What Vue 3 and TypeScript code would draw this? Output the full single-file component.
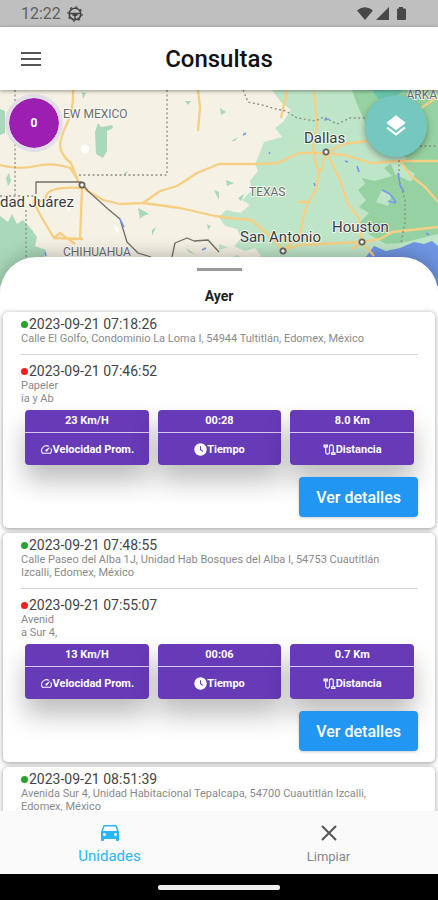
<script setup lang="ts">
interface Trip {
  start: string
  from: string
  end?: string
  to?: string[]
  stats?: { value: string; label: string; icon: 'speed' | 'clock' | 'route' }[]
}

function stats(speed: string, time: string, distance: string): Trip['stats'] {
  return [
    { value: speed, label: 'Velocidad Prom.', icon: 'speed' },
    { value: time, label: 'Tiempo', icon: 'clock' },
    { value: distance, label: 'Distancia', icon: 'route' },
  ]
}

const trips: Trip[] = [
  {
    start: '2023-09-21 07:18:26',
    from: 'Calle El Golfo, Condominio La Loma I, 54944 Tultitlán, Edomex, México',
    end: '2023-09-21 07:46:52',
    to: ['Papeler', 'ia y Ab'],
    stats: stats('23 Km/H', '00:28', '8.0 Km'),
  },
  {
    start: '2023-09-21 07:48:55',
    from: 'Calle Paseo del Alba 1J, Unidad Hab Bosques del Alba I, 54753 Cuautitlán Izcalli, Edomex, México',
    end: '2023-09-21 07:55:07',
    to: ['Avenid', 'a Sur 4,'],
    stats: stats('13 Km/H', '00:06', '0.7 Km'),
  },
  {
    start: '2023-09-21 08:51:39',
    from: 'Avenida Sur 4, Unidad Habitacional Tepalcapa, 54700 Cuautitlán Izcalli, Edomex, México',
  },
]
</script>

<template>
  <div class="screen">
    <div class="status">
      <span class="time">12:22</span>
      <svg class="wheel" viewBox="0 0 16 16" aria-hidden="true">
        <circle cx="8" cy="8" r="5.8" fill="none" stroke="#444" stroke-width="1.6" />
        <circle cx="8" cy="8" r="7.1" fill="none" stroke="#444" stroke-width="1.2" stroke-dasharray="2.2 3.38" />
        <path d="M2.5 7.4h11M8 7.5v6M5.500 8.500 8 10l2.500-1.500" fill="none" stroke="#444" stroke-width="1.5" />
      </svg>
      <svg class="signals" viewBox="0 0 50 16" aria-hidden="true">
        <g fill="#484848">
          <path d="M0 4.5Q8-2 16 4.500L8 14z" />
          <path d="M32 1v13H19z" />
          <path d="M42 1h4v1.500h2q1 0 1 1V13q0 1-1 1h-7q-1 0-1-1V3.500q0-1 1-1h1z" />
        </g>
      </svg>
    </div>

    <header class="appbar">
      <button class="menu" type="button" aria-label="Menú">
        <svg viewBox="0 0 20 16" aria-hidden="true">
          <path d="M0 2h20M0 8h20M0 14h20" stroke="#555" stroke-width="2.2" />
        </svg>
      </button>
      <h1>Consultas</h1>
    </header>

    <section class="map" aria-label="Mapa">
      <svg class="tiles" viewBox="0 90 438 196" preserveAspectRatio="xMidYMid slice">
        <rect x="0" y="90" width="438" height="196" fill="#f5f1e4" />
        <path fill="#bfe5c8" d="M272 90 281 102 291 110 283 122 275 128 282 137 264 142 259 155 255 164 258 171 250 181 252 190 242 200 250 205 240 213 226 210 219 217 225 226 237 229 241 238 232 249 219 244V286H438V90z" />
        <path fill="#96d2a1" d="M352 90H438V234L418 239 402 243 386 244 370 235 360 222 369 213 359 207 366 200 358 190 365 184 362 178 375 181 392 176 384 168 397 160 388 150 373 141 364 120 357 104z" />
        <path fill="#bfe5c8" d="M395 150l12 8-7 6 15 10-4 8-16-8-6-14zM382 190l10 4-4 12-12-4z" />
        <path fill="#6cc9ac" d="M372 90h32l-8 6-18 3z" />
        <path fill="#f5f1e4" d="M219 250l14-4 12 5 10-3 6 8-14 4-10-5-18 8zM262 97l10-3 4 8-10 4z" />
        <path fill="#7095e3" d="M366 257 374 246 386 251 400 248 414 242 424 244 432 241 438 246V286H362z" />
        <path fill="#a9d9ba" d="M0 216 8 222 12 214 17 224 23 220 32 230 37 237 35 246 46 250 44 258 30 268 0 286zM0 109l5 2v22l-5 2zM98 123l3 4 11-2 1 3-6 3v20l-4 7-7-4-1-22zM6 178l3-5 2 8-3 5zM82 92l4 1-3 6zM138 208l6 3 5 3-6 2-3 3zM152 230l4-3-4 9zM185 101l6 0-3 4zM124 173l4-2-3 5zM214 190l5 2v8zM207 224l4 2-3 4zM186 248l10 7-7-3z" />
        <path fill="#a9d9ba" d="M220 108l6 4-5 3zM231 141l7-4-3 4zM226 180l8 3-7 3zM238 198l6-4-3 7z" />
        <g fill="#fff"><circle cx="85" cy="149" r="4" /><path d="M66 205l3 8 2-8zM114 225l5 5-2 4z" /></g>

        <g fill="none" stroke="#f7cf83" stroke-width="2.300" stroke-linejoin="round">
          <path d="M73 90Q74 110 66 126T61 150 71 163L78 181 86 190 103 200 120 204 143 203 160 191 177 186 197 173 219 164 257 164 278 163 299 153 325 153 344 155 371 163 400 161 438 161" />
          <path d="M0 165Q20 170 36 166T70 168L77 178M82 188 80 240M82 188Q45 186 46 198M33 201 42 218 54 238 83 239M54 238 60 233 75 244M143 203 180 208 215 216 230 218 251 220 270 236 283 250 300 245 361 242 380 239 392 232 438 227" />
          <path d="M198 90 200 107 198 131M287 90 281 118M314 90 317 125 313 150 316 164 319 173 316 190 308 203 303 218 300 236 283 250M298 202h11M325 153 322 168 319 173M327 153 340 180 348 204 359 218 362 242 374 256M325 153 344 144 367 141M400 161 411 176 425 187 438 202M421 108 438 97M352 249l10-6M46 198 40 202" />
        </g>
        <g fill="none" stroke="#8d8d85" stroke-width="1.300" stroke-dasharray="2 2.500">
          <path d="M15 90V195M167 90V175H78M26 210V258M0 196h34" />
          <path d="M243 90 248 102 262 105 276 109 286 111 297 118 315 121 324 117 337 124 350 118 366 118M399 160V180L405 200 405 222 401 243M420 146H438" />
        </g>
        <g fill="none" stroke="#706f68" stroke-width="1.300" stroke-linejoin="round">
          <path d="M36 194V182H81L88 191 108 209 120 219 127 242 138 253 151 257M172 257 175 243 187 238 194 241 208 240 219 252" />
        </g>
        <g fill="none" stroke="#7898e8" stroke-width="1.600">
          <path d="M120 219l4 8M202 250l4-2M324 120l5-1M345 161l3 1M357 166l2 6M382 190l8 4 6 8M398 173l2 12 4 7M388 201l8 2M314 183l1 3M246 133l-3 2M270 152l-1 2M426 233l3 2M45 252l1 4" />
        </g>
        <g fill="#fff" stroke="#66645f" stroke-width="1.800">
          <circle cx="82" cy="185" r="2.600" /><circle cx="326" cy="152" r="2.600" />
          <circle cx="362" cy="242" r="2.600" /><circle cx="283" cy="251" r="2.600" />
        </g>
        <g class="region">
          <text x="63" y="118">EW MEXICO</text>
          <text x="249" y="196">TEXAS</text>
          <text x="63" y="256">CHIHUAHUA</text>
          <text x="437" y="99" text-anchor="end">ARKA</text>
        </g>
        <g class="city">
          <text x="0" y="207">dad Juárez</text>
          <text x="304" y="143">Dallas</text>
          <text x="332" y="232">Houston</text>
          <text x="240" y="242">San Antonio</text>
        </g>
      </svg>
      <div class="counter">0</div>
      <button class="layers" type="button" aria-label="Capas">
        <svg viewBox="0 0 24 24" aria-hidden="true">
          <path fill="#fff" d="m11.990 18.540-7.370-5.730L3 14.070l9 7 9-7-1.630-1.270-7.380 5.740zM12 16l7.360-5.730L21 9l-9-7-9 7 1.630 1.270L12 16z" />
        </svg>
      </button>
    </section>

    <main class="sheet">
      <div class="sheet-head">
        <span class="handle"></span>
        <h2>Ayer</h2>
      </div>
      <div class="list">
        <article v-for="trip in trips" :key="trip.start" class="card">
          <p class="stamp"><span class="dot start"></span>{{ trip.start }}</p>
          <p class="address">{{ trip.from }}</p>
          <template v-if="trip.end">
            <hr />
            <p class="stamp"><span class="dot end"></span>{{ trip.end }}</p>
            <p v-for="line in trip.to" :key="line" class="address">{{ line }}</p>
            <div class="stats">
              <div v-for="s in trip.stats" :key="s.label" class="stat">
                <div class="value">{{ s.value }}</div>
                <div class="label">
                  <svg v-if="s.icon === 'speed'" viewBox="0 0 24 24" aria-hidden="true">
                    <path fill="#fff" d="m20.380 8.570-1.230 1.850a8 8 0 0 1-.22 7.580H5.070A8 8 0 0 1 15.580 6.850l1.850-1.230A10 10 0 0 0 3.350 19a2 2 0 0 0 1.720 1h13.850a2 2 0 0 0 1.740-1 10 10 0 0 0-.27-10.440zm-9.790 6.840a2 2 0 0 0 2.830 0l5.660-8.490-8.490 5.660a2 2 0 0 0 0 2.830z" />
                  </svg>
                  <svg v-else-if="s.icon === 'clock'" viewBox="0 0 24 24" aria-hidden="true">
                    <circle cx="12" cy="12" r="11.500" fill="#fff" />
                    <path d="M12 6v6.500l4.500 3" fill="none" stroke="#673ab7" stroke-width="2" />
                  </svg>
                  <svg v-else viewBox="0 0 24 24" aria-hidden="true">
                    <path d="M5 7v10a3.500 3.500 0 0 0 7 0V7a3.500 3.500 0 0 1 7 0v10M2 4h6v3H2zM16 18h6v3h-6z" fill="none" stroke="#fff" stroke-width="2.200" />
                  </svg>
                  <span>{{ s.label }}</span>
                </div>
              </div>
            </div>
            <button class="details" type="button">Ver detalles</button>
          </template>
        </article>
      </div>
    </main>

    <nav class="tabs">
      <button class="tab active" type="button">
        <svg viewBox="0 0 24 24" aria-hidden="true">
          <path fill="currentColor" d="M18.920 5.010C18.720 4.420 18.160 4 17.500 4h-11c-.66 0-1.210.42-1.420 1.010L3 11v8c0 .55.45 1 1 1h1c.55 0 1-.45 1-1v-1h12v1c0 .55.45 1 1 1h1c.55 0 1-.45 1-1v-8l-2.080-5.990zM6.500 15c-.83 0-1.500-.67-1.500-1.500S5.670 12 6.500 12s1.500.67 1.500 1.500S7.330 15 6.500 15zm11 0c-.83 0-1.500-.67-1.500-1.500s.67-1.500 1.500-1.500 1.500.67 1.500 1.500-.67 1.500-1.500 1.500zM5 10l1.500-4.500h11L19 10H5z" />
        </svg>
        <span>Unidades</span>
      </button>
      <button class="tab" type="button">
        <svg viewBox="0 0 24 24" aria-hidden="true">
          <path d="M5 5l14 14M19 5 5 19" fill="none" stroke="#555" stroke-width="2" />
        </svg>
        <span>Limpiar</span>
      </button>
    </nav>
    <div class="gesture"><span></span></div>
  </div>
</template>

<style>
body {
  margin: 0;
  background: #fff;
}
</style>

<style scoped>
.screen {
  display: flex;
  flex-direction: column;
  height: 100vh;
  overflow: hidden;
  font-family: Roboto, "Liberation Sans", sans-serif;
  color: #444;
}
button {
  border: 0;
  padding: 0;
  background: none;
  font-family: inherit;
}
svg {
  display: block;
}
h1,
h2,
p {
  margin: 0;
}
.status {
  flex: none;
  display: flex;
  align-items: center;
  height: 27px;
  padding: 0 31px 0 21px;
  background: #bfbfbf;
}
.time {
  font-size: 16px;
  color: #606060;
}
.wheel {
  width: 16px;
  height: 16px;
  margin-left: 6px;
}
.signals {
  width: 50px;
  height: 16px;
  margin-left: auto;
}
.appbar {
  position: relative;
  z-index: 2;
  flex: none;
  display: grid;
  grid-template-columns: 20px 1fr 20px;
  align-items: center;
  height: 63px;
  padding: 0 21px;
  background: #fff;
  box-shadow: 0 1px 4px rgba(0, 0, 0, 0.4);
}
.menu svg {
  width: 20px;
  height: 16px;
}
.appbar h1 {
  text-align: center;
  font-size: 24px;
  line-height: 28px;
  font-weight: 500;
  color: #111;
}
.map {
  position: relative;
  flex: none;
  height: 196px;
  overflow: hidden;
}
.tiles {
  width: 100%;
  height: 100%;
}
.tiles text {
  paint-order: stroke;
  stroke: rgba(255, 255, 255, 0.75);
  stroke-width: 2px;
}
.region {
  font-size: 12px;
  fill: #6c6c6c;
}
.city {
  font-size: 15px;
  fill: #3c3c3c;
}
.counter {
  position: absolute;
  left: 5px;
  top: 4px;
  display: flex;
  align-items: center;
  justify-content: center;
  width: 50px;
  height: 50px;
  border: 4px solid #e2dde8;
  border-radius: 50%;
  background: #9c1fb1;
  background-clip: padding-box;
  color: #fff;
  font-size: 12px;
  font-weight: 700;
}
.layers {
  position: absolute;
  right: 11px;
  top: 5px;
  display: flex;
  align-items: center;
  justify-content: center;
  width: 62px;
  height: 62px;
  border-radius: 50%;
  background: #75c8bf;
  box-shadow: 0 3px 7px rgba(0, 0, 0, 0.35);
}
.layers svg {
  width: 26px;
  height: 26px;
}
.sheet {
  position: relative;
  z-index: 1;
  flex: 1;
  min-height: 0;
  display: flex;
  flex-direction: column;
  margin-top: -29px;
  border-radius: 36px 36px 0 0;
  background: #fff;
  box-shadow: 0 0 20px rgba(0, 0, 0, 0.3);
}
.sheet-head {
  flex: none;
  display: flex;
  flex-direction: column;
  align-items: center;
  gap: 16px;
  padding-top: 11px;
}
.handle {
  width: 45px;
  height: 3px;
  background: #999;
}
.sheet-head h2 {
  font-size: 14px;
  line-height: 18px;
  font-weight: 700;
  color: #222;
}
.list {
  flex: 1;
  min-height: 0;
  overflow: hidden;
  display: flex;
  flex-direction: column;
  gap: 5px;
  padding: 7px 3px 0;
}
.card {
  flex: none;
  display: flex;
  flex-direction: column;
  padding: 4px 17px 11px 18px;
  border-radius: 5px;
  background: #fff;
  box-shadow: 0 1px 5px rgba(0, 0, 0, 0.42);
}
.stamp {
  display: flex;
  align-items: center;
  gap: 1px;
  font-size: 14px;
  line-height: 16px;
  color: #444;
}
.dot {
  width: 7px;
  height: 7px;
  border-radius: 50%;
}
.start {
  background: #27a42b;
}
.end {
  background: #ee2020;
}
.address {
  padding-right: 14px;
  font-size: 11px;
  line-height: 13px;
  color: #8a8a8a;
}
hr {
  width: 100%;
  height: 1px;
  margin: 9px 0 8px;
  border: 0;
  background: #d6d6d6;
}
.stats {
  display: grid;
  grid-template-columns: repeat(3, 1fr);
  gap: 9px;
  margin: 5px 4px 12px;
}
.stat {
  border-radius: 4px;
  background: #673ab7;
  color: #fff;
  font-size: 11px;
  font-weight: 700;
  box-shadow: 0 16px 26px rgba(0, 0, 0, 0.26);
}
.value {
  line-height: 22px;
  text-align: center;
  border-bottom: 1px solid #d6c8ef;
}
.label {
  display: flex;
  align-items: center;
  justify-content: center;
  height: 32px;
  padding-top: 1px;
  box-sizing: border-box;
}
.label svg {
  width: 13px;
  height: 13px;
}
.details {
  position: relative;
  align-self: flex-end;
  height: 40px;
  padding: 0 17px;
  border-radius: 4px;
  background: #2196f3;
  color: #fff;
  font-size: 16px;
  font-weight: 500;
  box-shadow: 0 1px 3px rgba(0, 0, 0, 0.2);
}
.tabs {
  position: relative;
  z-index: 2;
  flex: none;
  display: grid;
  grid-template-columns: 1fr 1fr;
  height: 63px;
  background: #fafafa;
}
.tab {
  display: flex;
  flex-direction: column;
  align-items: center;
  justify-content: center;
  gap: 3px;
  color: #888;
  font-size: 13px;
  line-height: 17px;
}
.tab svg {
  width: 24px;
  height: 24px;
}
.active {
  color: #29b6f6;
  font-size: 15px;
}
.gesture {
  flex: none;
  display: flex;
  align-items: center;
  justify-content: center;
  height: 26px;
  background: #000;
}
.gesture span {
  width: 122px;
  height: 5px;
  border-radius: 2px;
  background: #eee;
}
</style>
